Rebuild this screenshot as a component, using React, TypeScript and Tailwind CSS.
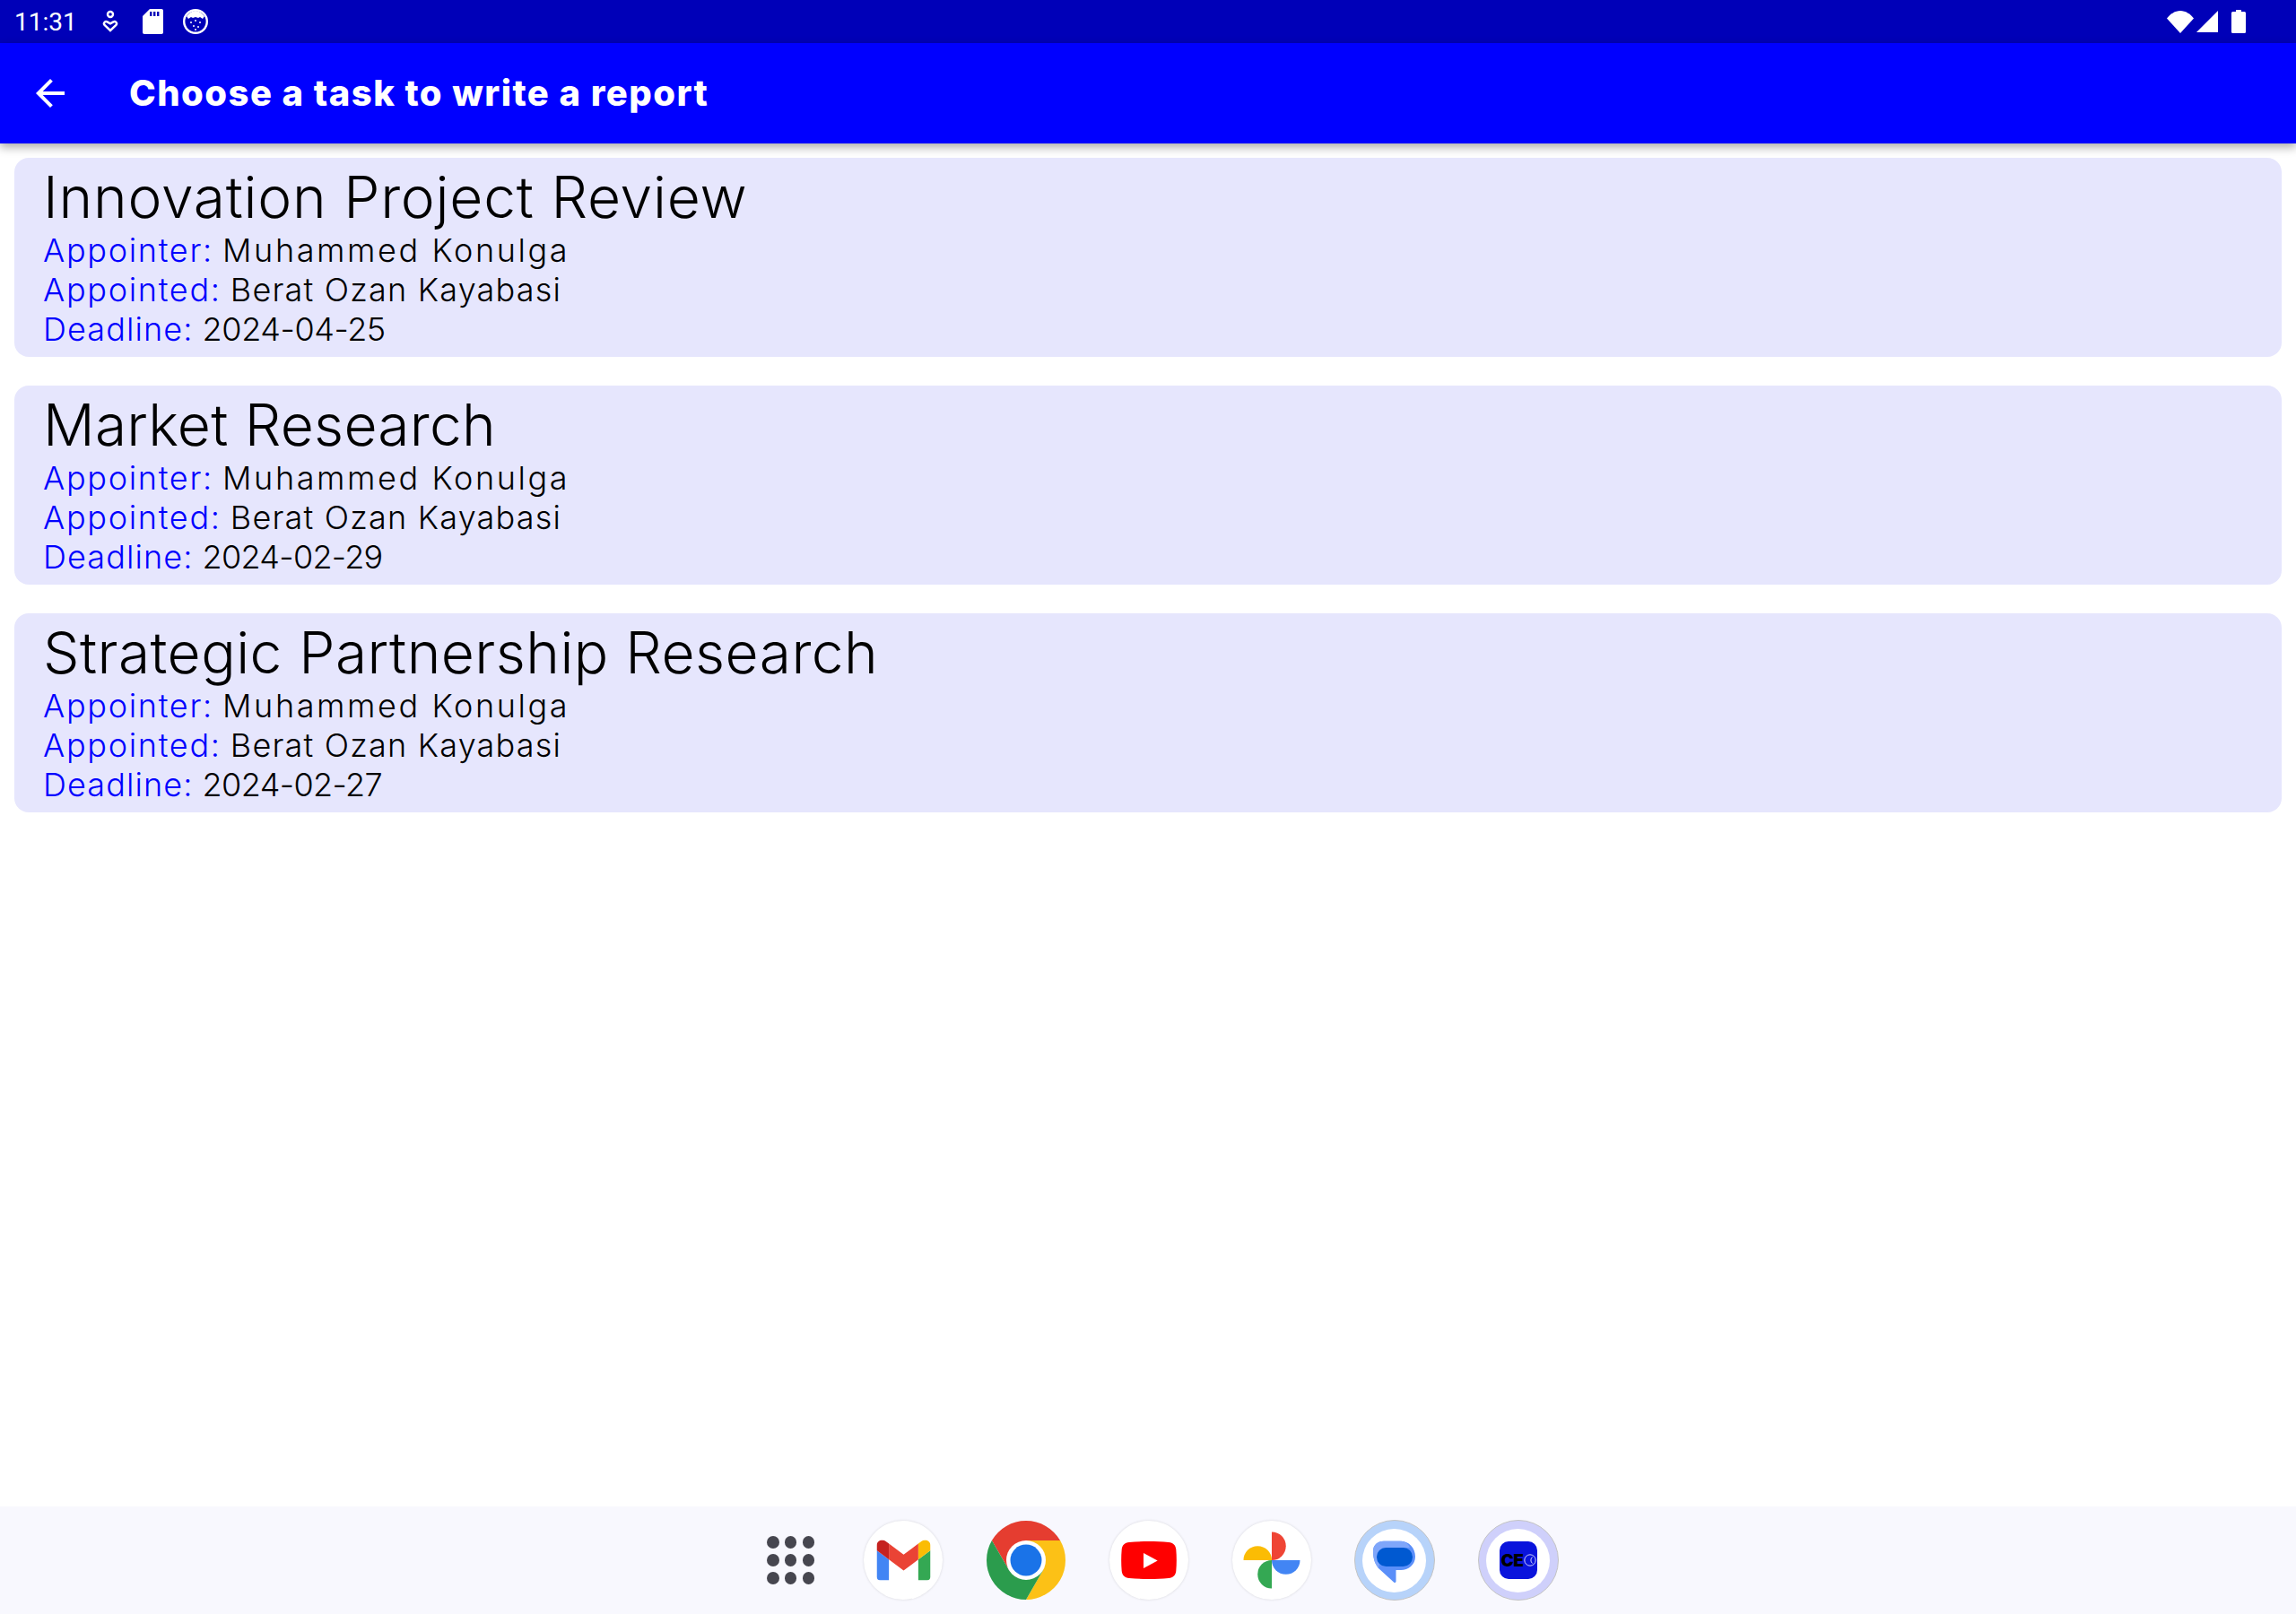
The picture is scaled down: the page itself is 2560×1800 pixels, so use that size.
const tasks = [
  { title: "Innovation Project Review", titleClass: "tracking-[0.78px]", deadline: "2024-04-25", dateClass: "tracking-[-0.4px]" },
  { title: "Market Research", titleClass: "tracking-[0.25px]", deadline: "2024-02-29", dateClass: "tracking-[-0.7px]" },
  { title: "Strategic Partnership Research", titleClass: "tracking-[0.47px]", deadline: "2024-02-27", dateClass: "tracking-[-0.6px]" },
];

const TaskRow = ({ label, labelClass, value, valueClass }: { label: string; labelClass: string; value: string; valueClass: string }) => (
  <p className="h-[44px] text-[36px] leading-[44px] font-light text-black">
    <span className={`${labelClass} text-[#0000ff]`}>{label}:</span> <span className={valueClass}>{value}</span>
  </p>
);

const TaskCard = ({ title, titleClass, deadline, dateClass }: { title: string; titleClass: string; deadline: string; dateClass: string }) => (
  <div className="h-[222px] rounded-[16px] bg-[#e6e6fd] pl-[32px] pt-[4px]">
    <h2 className={`${titleClass} h-[77px] text-[64px] leading-[80px] font-light text-black`}>
      {title}
    </h2>
    <TaskRow label="Appointer" labelClass="tracking-[1.7px]" value="Muhammed Konulga" valueClass="tracking-[2.6px]" />
    <TaskRow label="Appointed" labelClass="tracking-[1.7px]" value="Berat Ozan Kayabasi" valueClass="tracking-[1.2px]" />
    <TaskRow label="Deadline" labelClass="tracking-[1.1px]" value={deadline} valueClass={dateClass} />
  </div>
);

const StatusBar = () => (
  <div className="flex h-[48px] items-center bg-[#0000b8] pl-[16px] pr-[56px] font-['Roboto',sans-serif] text-white">
    <span className="w-[96px] pt-[1px] text-[28px] leading-[48px]">11:31</span>
    <svg width="22" height="28" viewBox="0 0 22 28" className="mr-[24px]" fill="none" stroke="white" strokeWidth="2.4">
      <circle cx="11" cy="6" r="3" />
      <path d="M11 24l-6.4-6c-2-2.4 1-5 3-3.6L11 16.4l3.4-2c2-1.4 5 1.2 3 3.6z" />
    </svg>
    <svg width="24" height="28" viewBox="0 0 24 28" className="mr-[21px]">
      <path fill="white" d="M9 0h13a2 2 0 0 1 2 2v24a2 2 0 0 1-2 2H3a2 2 0 0 1-2-2V8z" />
      <path fill="#0000b8" d="M9 3h2.4v5H9zM13 3h2.4v5H13zM17 3h2.4v5H17z" />
    </svg>
    <svg width="30" height="30" viewBox="0 0 30 30">
      <circle cx="15" cy="15" r="12.8" fill="#0000b8" stroke="white" strokeWidth="2.4" />
      <path fill="white" d="M5 9c3-4 7-6 10-6s7 2 10 6l-2 3-3-2-2 1-3-1-3 1-2-1-3 2z" />
      <g fill="white">
        <circle cx="10" cy="16" r="1" />
        <circle cx="15" cy="14" r="1" />
        <circle cx="20" cy="16" r="1" />
        <circle cx="13" cy="20" r="1" />
        <circle cx="18" cy="21" r="1" />
        <circle cx="15" cy="24" r="1" />
      </g>
    </svg>
    <div className="flex-1" />
    <svg width="30" height="25" viewBox="0 0 30 25" className="mr-[3px]">
      <path fill="white" d="M0 8.5C4 3.5 9 0 15 0s11 3.500 15 8.500L15 25z" />
    </svg>
    <svg width="24" height="24" viewBox="0 0 24 24" className="mr-[15px]">
      <path fill="white" d="M24 0v24H0z" />
    </svg>
    <svg width="16" height="26" viewBox="0 0 16 26">
      <path fill="white" d="M5 0h6v2h3.500A1.500 1.500 0 0 1 16 3.500v21a1.500 1.500 0 0 1-1.500 1.500h-13A1.500 1.500 0 0 1 0 24.500v-21A1.500 1.500 0 0 1 1.500 2H5z" />
    </svg>
  </div>
);

const AppBar = () => (
  <div className="relative z-10 flex h-[112px] items-center bg-[#0000ff] pl-[32px] shadow-[0_4px_10px_rgba(0,0,0,0.35)]">
    <svg width="48" height="48" viewBox="0 0 24 24" className="mr-[64px]">
      <path fill="white" d="M20 11H7.830l5.590-5.590L12 4l-8 8 8 8 1.410-1.410L7.830 13H20v-2z" />
    </svg>
    <h1 className="text-[40px] font-extrabold tracking-[1.46px] text-white">Choose a task to write a report</h1>
  </div>
);

const DockCircle = ({ children }: { children: React.ReactNode }) => (
  <div className="h-[88px] w-[88px] rounded-full bg-white shadow-[0_0_3px_rgba(0,0,0,0.14)]">{children}</div>
);

const Gmail = () => (
  <DockCircle>
    <svg width="88" height="88" viewBox="0 0 88 88">
      <svg x="14.500" y="21.500" width="60" height="45" viewBox="52 42 88 66">
        <path fill="#4285f4" d="M58 108h14V74L52 59v43c0 3.320 2.690 6 6 6" />
        <path fill="#34a853" d="M120 108h14c3.320 0 6-2.690 6-6V59l-20 15" />
        <path fill="#fbbc04" d="M120 48v26l20-15v-8c0-7.420-8.470-11.650-14.400-7.200" />
        <path fill="#ea4335" d="M72 74V48l24 18 24-18v26L96 92" />
        <path fill="#c5221f" d="M52 51v8l20 15V48l-5.600-4.200c-5.940-4.450-14.400-.22-14.400 7.200" />
      </svg>
    </svg>
  </DockCircle>
);

const Chrome = () => (
  <svg width="88" height="88" viewBox="0 0 88 88">
    <path fill="#e53d30" d="M44 22L82.100 22A44 44 0 0 0 5.900 22L24.950 55Z" />
    <path fill="#fcc116" d="M63.050 55L44 88A44 44 0 0 0 82.100 22L44 22Z" />
    <path fill="#2b9c4d" d="M24.950 55L5.900 22A44 44 0 0 0 44 88L63.050 55Z" />
    <circle cx="44" cy="44" r="22" fill="white" />
    <circle cx="44" cy="44" r="17.500" fill="#1a73e8" />
  </svg>
);

const YouTube = () => (
  <DockCircle>
    <svg width="88" height="88" viewBox="0 0 88 88">
      <path fill="#ff0000" d="M22 24c14-1.300 30-1.300 44 0 5 .5 8 3.500 8.300 8 .7 8 .7 16 0 24-.3 4.500-3.300 7.500-8.300 8-14 1.300-30 1.300-44 0-5-.5-8-3.500-8.300-8-.7-8-.7-16 0-24 .3-4.500 3.300-7.500 8.300-8z" />
      <path fill="white" d="M38 36l15.700 8.500L38 53z" />
    </svg>
  </DockCircle>
);

const Photos = () => (
  <DockCircle>
    <svg width="88" height="88" viewBox="0 0 88 88">
      <path fill="#ef4535" d="M44 12.500a15.750 15.750 0 0 1 0 31.500z" />
      <path fill="#fbbc04" d="M12.500 44a15.750 15.750 0 0 1 31.500 0z" />
      <path fill="#34a853" d="M44 75.500a15.750 15.750 0 0 1 0-31.500z" />
      <path fill="#4285f4" d="M75.500 44a15.750 15.750 0 0 1-31.500 0z" />
    </svg>
  </DockCircle>
);

const RingCircle = ({ ring, children }: { ring: string; children: React.ReactNode }) => (
  <div className={`${ring} -ml-[1px] flex h-[90px] w-[90px] items-center justify-center rounded-full border border-[#c4c4c4]`}>
    <div className="relative h-[71px] w-[71px] rounded-full bg-white">{children}</div>
  </div>
);

const Messages = () => (
  <RingCircle ring="bg-[#b7d3fa]">
    <svg width="71" height="71" viewBox="0 0 71 71">
      <path fill="#5b8ff9" d="M24 13.700H42C52 13.700 59 21 59 31C59 40 51 46 43 46H37.500V58.500C37.500 60 36 60.500 35 59.500L18 44C14 39 12 33 12 25C12 18 17 13.700 24 13.700Z" />
      <path fill="#7fa6fa" d="M24 13.700H42C47 13.700 51 16 53 21H27C20 21 16 26 16 31C16 34 17 37 19 39L18 44C14 39 12 33 12 25C12 18 17 13.700 24 13.700Z" />
      <rect x="16" y="21" width="40" height="21" rx="10.500" fill="#0059d1" />
    </svg>
  </RingCircle>
);

const CeoApp = () => (
  <RingCircle ring="bg-[#cfd0fb]">
    <div className="absolute left-[14.500px] top-[14.500px] flex h-[42px] w-[42px] items-center rounded-[10px] bg-[#0a14dc] pl-[2px]">
      <span className="font-['Inter',sans-serif] text-[19px] leading-none font-black tracking-[-0.5px] text-black">CE</span>
      <svg width="14" height="14" viewBox="0 0 14 14" fill="none" stroke="white" strokeWidth="0.8" className="ml-[1px]">
        <circle cx="7" cy="7" r="6.200" />
        <path d="M9.500 3.500a4.600 4.600 0 0 0 0 7" />
      </svg>
    </div>
  </RingCircle>
);

const AppsGrid = () => (
  <div className="-mr-[12px] grid h-[88px] w-[88px] grid-cols-3 content-center gap-[6.500px] px-[17.500px]">
    {Array.from({ length: 9 }).map((_, i) => (
      <span key={i} className="h-[13.500px] w-[13.500px] rounded-full bg-[#46464f]" />
    ))}
  </div>
);

const Dock = () => (
  <div className="flex h-[120px] items-center justify-center gap-[49px] bg-[#f8f8fe] pl-[15px]">
    <AppsGrid />
    <Gmail />
    <Chrome />
    <YouTube />
    <Photos />
    <Messages />
    <CeoApp />
  </div>
);

export default function App() {
  return (
    <div className="flex h-[1800px] w-[2560px] flex-col overflow-hidden bg-white font-['Inter',sans-serif]">
      <StatusBar />
      <AppBar />
      <div className="flex flex-1 flex-col gap-[32px] px-[16px] pt-[16px]">
        {tasks.map((task) => (
          <TaskCard key={task.title} title={task.title} titleClass={task.titleClass} deadline={task.deadline} dateClass={task.dateClass} />
        ))}
      </div>
      <Dock />
    </div>
  );
}
